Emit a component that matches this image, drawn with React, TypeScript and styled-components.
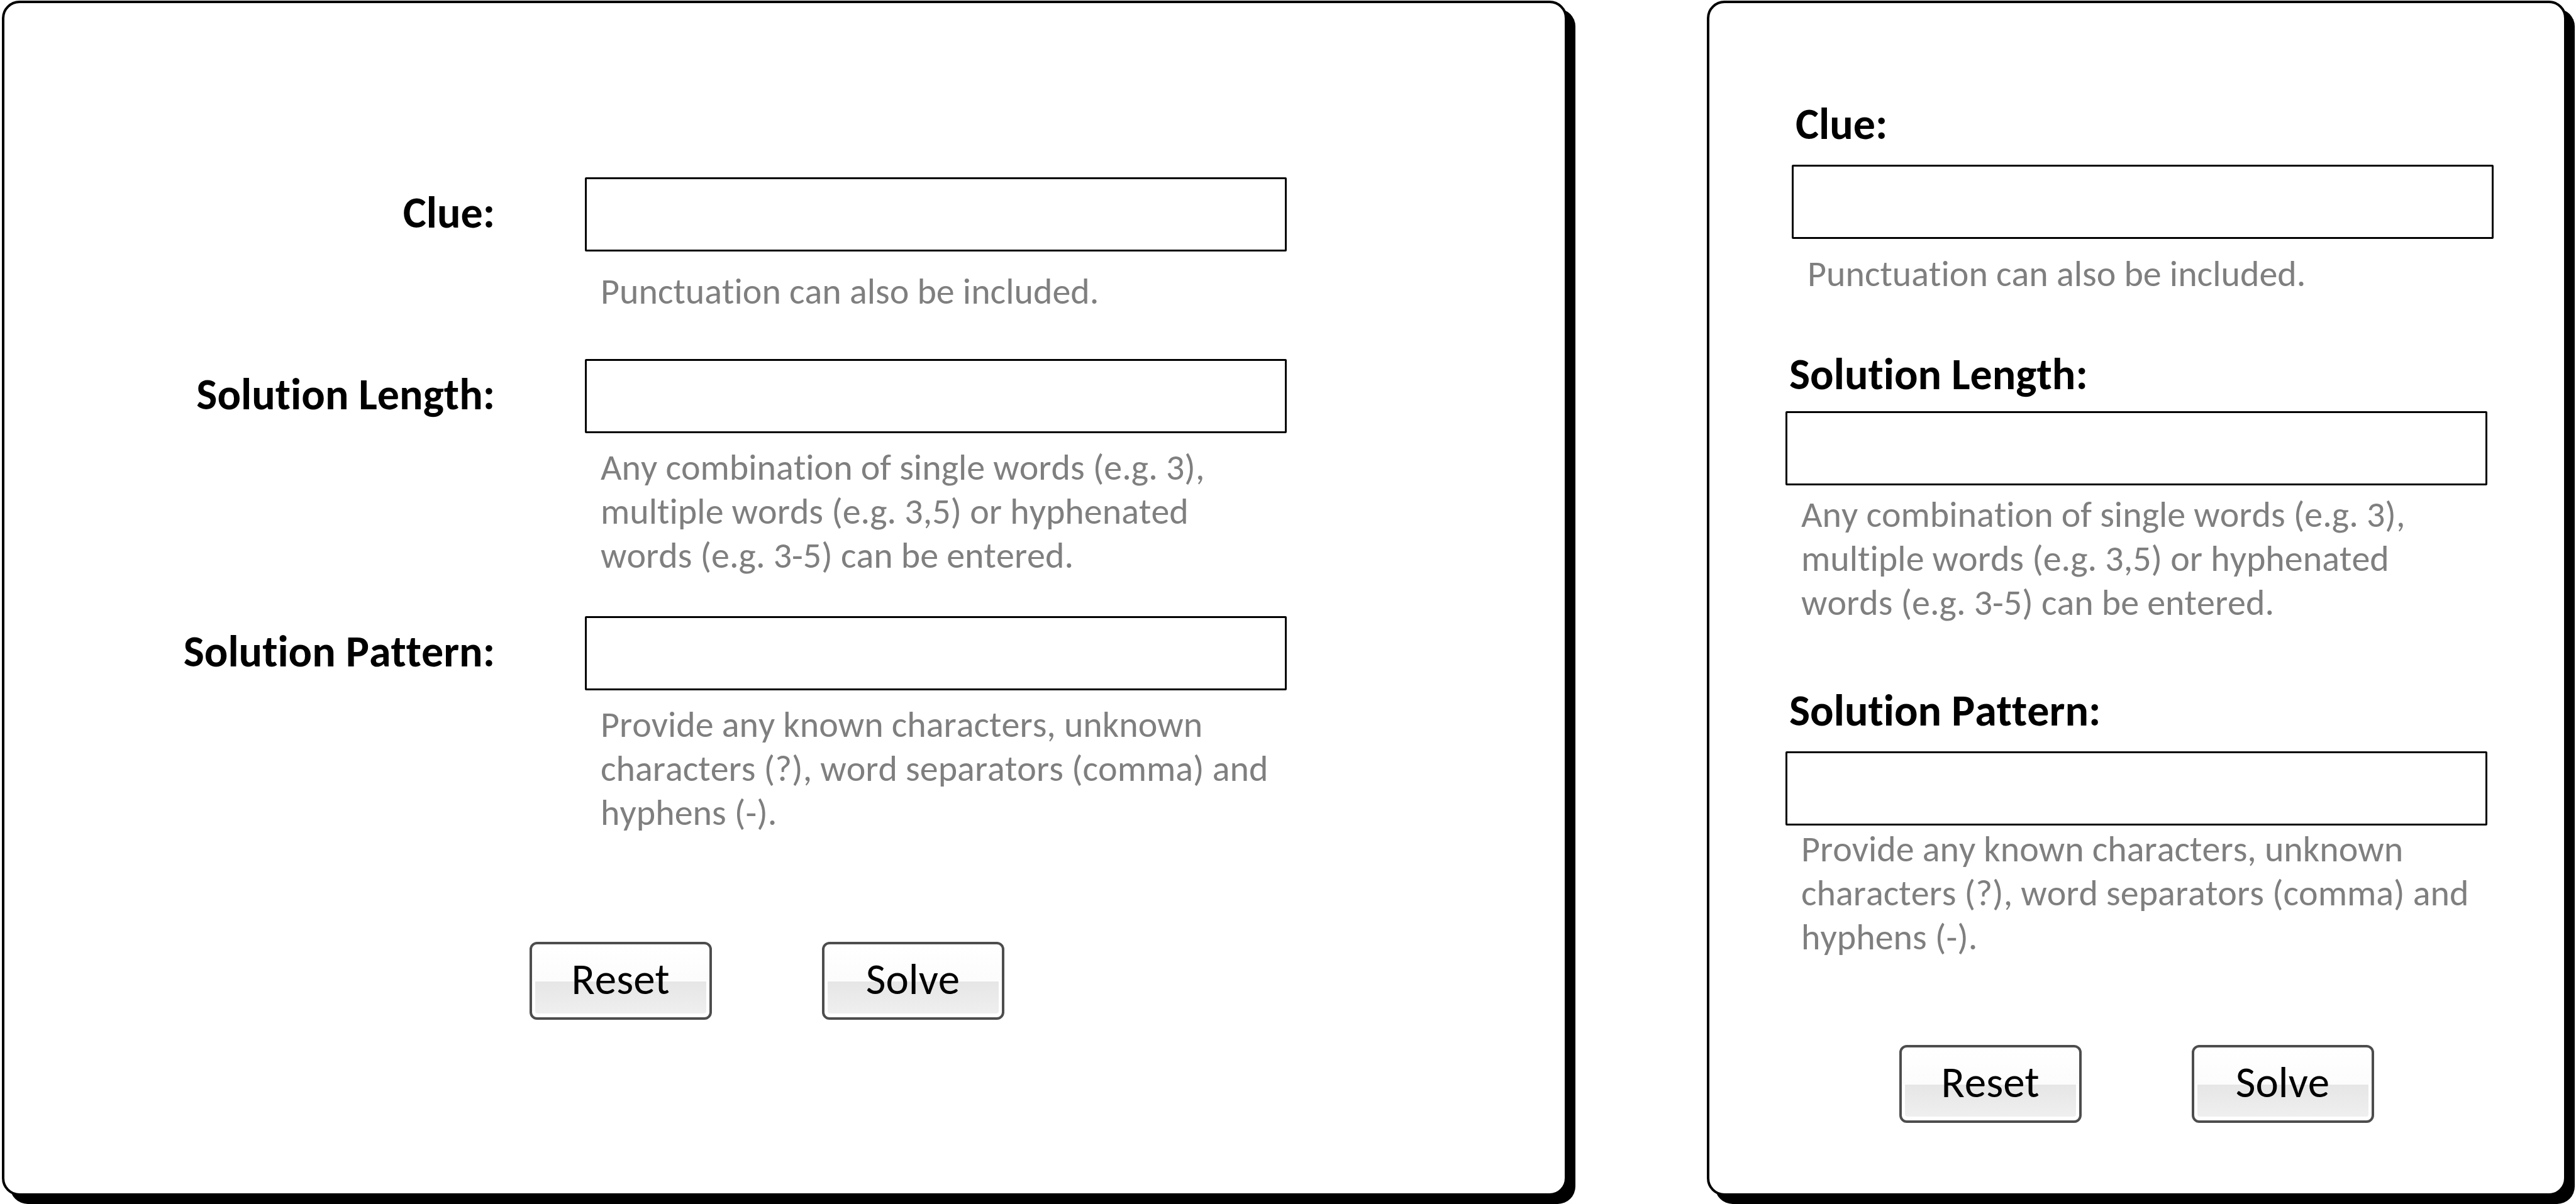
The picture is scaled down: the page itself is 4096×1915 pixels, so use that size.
import React, { useId } from "react";
import styled, { createGlobalStyle } from "styled-components";

const GlobalStyle = createGlobalStyle`
  *, *::before {
    box-sizing: border-box;
  }

  body {
    margin: 0;
    background: #ffffff;
    color: #000000;
    font-family: Carlito, Calibri, Lato, sans-serif;
    font-kerning: none;
    font-variant-ligatures: none;
  }
`;

const Page = styled.main`
  display: grid;
  grid-template-columns: minmax(0, 2489fr) minmax(0, 1367fr);
  column-gap: 222px;
  min-height: 100vh;
  padding: 1px 15px 13px 3px;
`;

const Card = styled.form<{ $top: number; $left: number; $right: number }>`
  display: flex;
  flex-direction: column;
  padding: ${(p) => `${p.$top}px ${p.$right}px 0 ${p.$left}px`};
  border: 4px solid #000000;
  border-radius: 28px;
  background: #ffffff;
  box-shadow: 13px 13px 0 #000000;
`;

const WideField = styled.div<{ $after: number }>`
  display: grid;
  grid-template-columns: minmax(0, 780fr) minmax(0, 1116fr);
  column-gap: 143px;
  margin-bottom: ${(p) => p.$after}px;
  padding-right: 442px;
`;

const NarrowField = styled.div<{ $after: number; $shift?: number }>`
  display: flex;
  flex-direction: column;
  margin: ${(p) => `0 ${-(p.$shift ?? 0)}px ${p.$after}px ${p.$shift ?? 0}px`};
`;

const Label = styled.label`
  font-size: 70px;
  font-weight: 700;
  white-space: nowrap;
`;

const SideLabel = styled(Label)`
  line-height: 112px;
  text-align: right;
`;

const TopLabel = styled(Label)<{ $gap: number }>`
  margin-bottom: ${(p) => p.$gap}px;
  padding-left: 6px;
  line-height: 84px;
`;

const TextBox = styled.input`
  display: block;
  width: 100%;
  height: 118px;
  padding: 0 24px;
  border: 3px solid #000000;
  border-radius: 2px;
  background: #ffffff;
  color: #000000;
  font: inherit;
  font-size: 58px;
`;

const Hint = styled.p<{ $gap: number }>`
  margin: ${(p) => p.$gap}px 0 0;
  padding: 0 20px 0 25px;
  color: #7f7f7f;
  font-size: 58px;
  line-height: 70px;
`;

const Actions = styled.div<{ $top: number; $right: number }>`
  display: flex;
  justify-content: center;
  gap: 175px;
  margin-top: ${(p) => p.$top}px;
  padding-right: ${(p) => p.$right}px;
`;

const Button = styled.button`
  position: relative;
  isolation: isolate;
  width: 290px;
  height: 124px;
  padding: 0 0 5px;
  border: 4px solid #4d4d4d;
  border-radius: 12px;
  background: linear-gradient(#ffffff, #fcfcfc 50%, #ffffff 50%);
  color: #000000;
  font: inherit;
  font-size: 69px;
  line-height: 84px;
  font-kerning: none;

  &::before {
    content: "";
    position: absolute;
    z-index: -1;
    inset: 59px 5px 6px;
    border-radius: 0 0 4px 4px;
    background: linear-gradient(#e6e6e6, #efefef);
  }
`;

interface Question {
  name: string;
  label: string;
  hint: string;
  wide: { hintGap: number; after: number };
  narrow: { labelGap: number; hintGap: number; after: number; shift?: number };
}

const questions: Question[] = [
  {
    name: "clue",
    label: "Clue:",
    hint: "Punctuation can also be included.",
    wide: { hintGap: 29, after: 72 },
    narrow: { labelGap: 23, hintGap: 21, after: 82, shift: 10 },
  },
  {
    name: "length",
    label: "Solution Length:",
    hint: "Any combination of single words (e.g. 3), multiple words (e.g. 3,5) or hyphenated words (e.g. 3-5) can be entered.",
    wide: { hintGap: 20, after: 61 },
    narrow: { labelGap: 17, hintGap: 12, after: 94 },
  },
  {
    name: "pattern",
    label: "Solution Pattern:",
    hint: "Provide any known characters, unknown characters (?), word separators (comma) and hyphens (-).",
    wide: { hintGap: 20, after: 0 },
    narrow: { labelGap: 23, hintGap: 3, after: 0 },
  },
];

function Buttons({ top, right = 0 }: { top: number; right?: number }) {
  return (
    <Actions $top={top} $right={right}>
      <Button type="reset">Reset</Button>
      <Button type="submit">Solve</Button>
    </Actions>
  );
}

const keepPage = (event: React.FormEvent) => event.preventDefault();

function WideForm() {
  const id = useId();
  return (
    <Card $top={277} $left={0} $right={0} onSubmit={keepPage}>
      {questions.map((q) => (
        <WideField key={q.name} $after={q.wide.after}>
          <SideLabel htmlFor={id + q.name}>{q.label}</SideLabel>
          <div>
            <TextBox id={id + q.name} name={q.name} type="text" aria-describedby={id + q.name + "-hint"} />
            <Hint id={id + q.name + "-hint"} $gap={q.wide.hintGap}>{q.hint}</Hint>
          </div>
        </WideField>
      ))}
      <Buttons top={170} right={57} />
    </Card>
  );
}

function NarrowForm() {
  const id = useId();
  return (
    <Card $top={150} $left={121} $right={122} onSubmit={keepPage}>
      {questions.map((q) => (
        <NarrowField key={q.name} $after={q.narrow.after} $shift={q.narrow.shift}>
          <TopLabel htmlFor={id + q.name} $gap={q.narrow.labelGap}>{q.label}</TopLabel>
          <TextBox id={id + q.name} name={q.name} type="text" aria-describedby={id + q.name + "-hint"} />
          <Hint id={id + q.name + "-hint"} $gap={q.narrow.hintGap}>{q.hint}</Hint>
        </NarrowField>
      ))}
      <Buttons top={136} />
    </Card>
  );
}

export default function App() {
  return (
    <>
      <GlobalStyle />
      <Page>
        <WideForm />
        <NarrowForm />
      </Page>
    </>
  );
}
